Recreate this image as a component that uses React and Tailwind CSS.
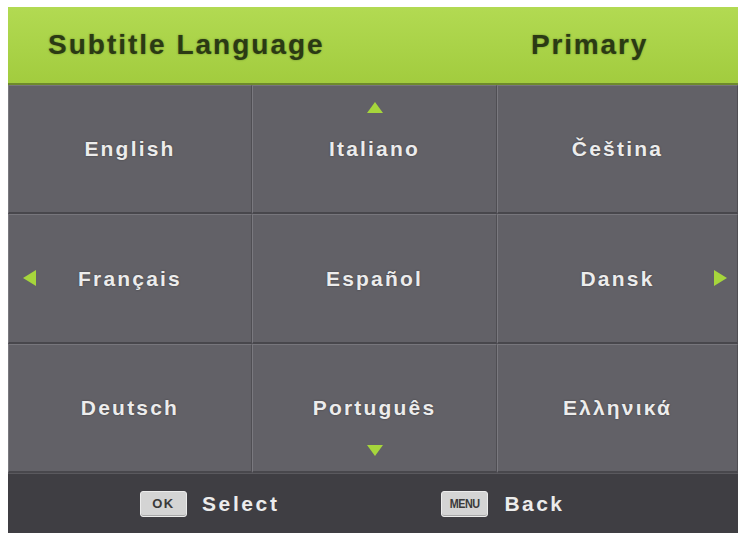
import React from 'react';

const rows = [
  ['English', 'Italiano', 'Čeština'],
  ['Français', 'Español', 'Dansk'],
  ['Deutsch', 'Português', 'Ελληνικά'],
];

const Tri = ({ dir, className }) => {
  const pts = {
    up: '8,0 16,11 0,11',
    down: '0,0 16,0 8,11',
    left: '13,0 13,16 0,8',
    right: '0,0 13,8 0,16',
  }[dir];
  const box = dir === 'up' || dir === 'down' ? '0 0 16 11' : '0 0 13 16';
  return (
    <svg viewBox={box} className={className}>
      <polygon points={pts} fill="#a6d63c" />
    </svg>
  );
};

const Cell = ({ label, r, c }) => (
  <div className="relative flex items-center justify-center bg-[#626167] border-t border-t-[#77767c] border-b-2 border-b-[#48474c] border-l border-l-[#7a797f] border-r border-r-[#4f4e53]">
    <span className="text-[21px] font-bold tracking-[2.2px] text-[#ececec] [text-shadow:0_0_2px_rgba(0,0,0,0.4)]">
      {label}
    </span>
    {r === 0 && c === 1 && <Tri dir="up" className="absolute top-[16px] left-1/2 -translate-x-1/2 w-[16px] h-[11px]" />}
    {r === 2 && c === 1 && <Tri dir="down" className="absolute bottom-[15px] left-1/2 -translate-x-1/2 w-[16px] h-[11px]" />}
    {r === 1 && c === 0 && <Tri dir="left" className="absolute left-[14px] top-1/2 -translate-y-1/2 w-[13px] h-[16px]" />}
    {r === 1 && c === 2 && <Tri dir="right" className="absolute right-[10px] top-1/2 -translate-y-1/2 w-[13px] h-[16px]" />}
  </div>
);

const Key = ({ children, tight }) => (
  <span className="flex items-center justify-center w-[47px] h-[26px] rounded-[3px] bg-[#d4d4d4] border border-[#ececec] shadow-[inset_0_-1px_0_#a8a8a8] text-[#3a3a3a] font-bold">
    <span className={tight ? 'text-[12px] tracking-[-0.5px] scale-x-90' : 'text-[13px] tracking-[1.5px]'}>{children}</span>
  </span>
);

export default function App() {
  return (
    <div className="w-[745px] h-[537px] bg-white pt-[7px] pl-[8px]" style={{ fontFamily: '"Liberation Sans", Arial, sans-serif' }}>
      <div className="w-[730px] h-[526px] flex flex-col overflow-hidden">
        <div className="h-[78px] flex items-center justify-between pl-[40px] pr-[90px] bg-gradient-to-b from-[#b2da52] to-[#a2cc3e] border-b-2 border-b-[#6e8a2c]">
          <span className="text-[28px] font-bold text-[#2b3a14] tracking-[2px] [text-shadow:0_0_2px_rgba(40,60,10,0.5)]">Subtitle Language</span>
          <span className="text-[28px] font-bold text-[#2b3a14] tracking-[1.8px] [text-shadow:0_0_2px_rgba(40,60,10,0.5)]">Primary</span>
        </div>
        <div className="flex-1 grid grid-cols-[244px_245px_1fr] grid-rows-3 bg-[#4a494e]">
          {rows.map((row, r) =>
            row.map((label, c) => <Cell key={`${r}-${c}`} label={label} r={r} c={c} />)
          )}
        </div>
        <div className="h-[60px] flex items-center bg-[#3f3e43] border-t border-t-[#5a595e]">
          <div className="flex items-center gap-[15px] ml-[132px]">
            <Key>OK</Key>
            <span className="text-[21px] font-bold tracking-[2.6px] text-[#ececec]">Select</span>
          </div>
          <div className="flex items-center gap-[16px] ml-[162px]">
            <Key tight>MENU</Key>
            <span className="text-[21px] font-bold tracking-[2.4px] text-[#ececec]">Back</span>
          </div>
        </div>
      </div>
    </div>
  );
}
